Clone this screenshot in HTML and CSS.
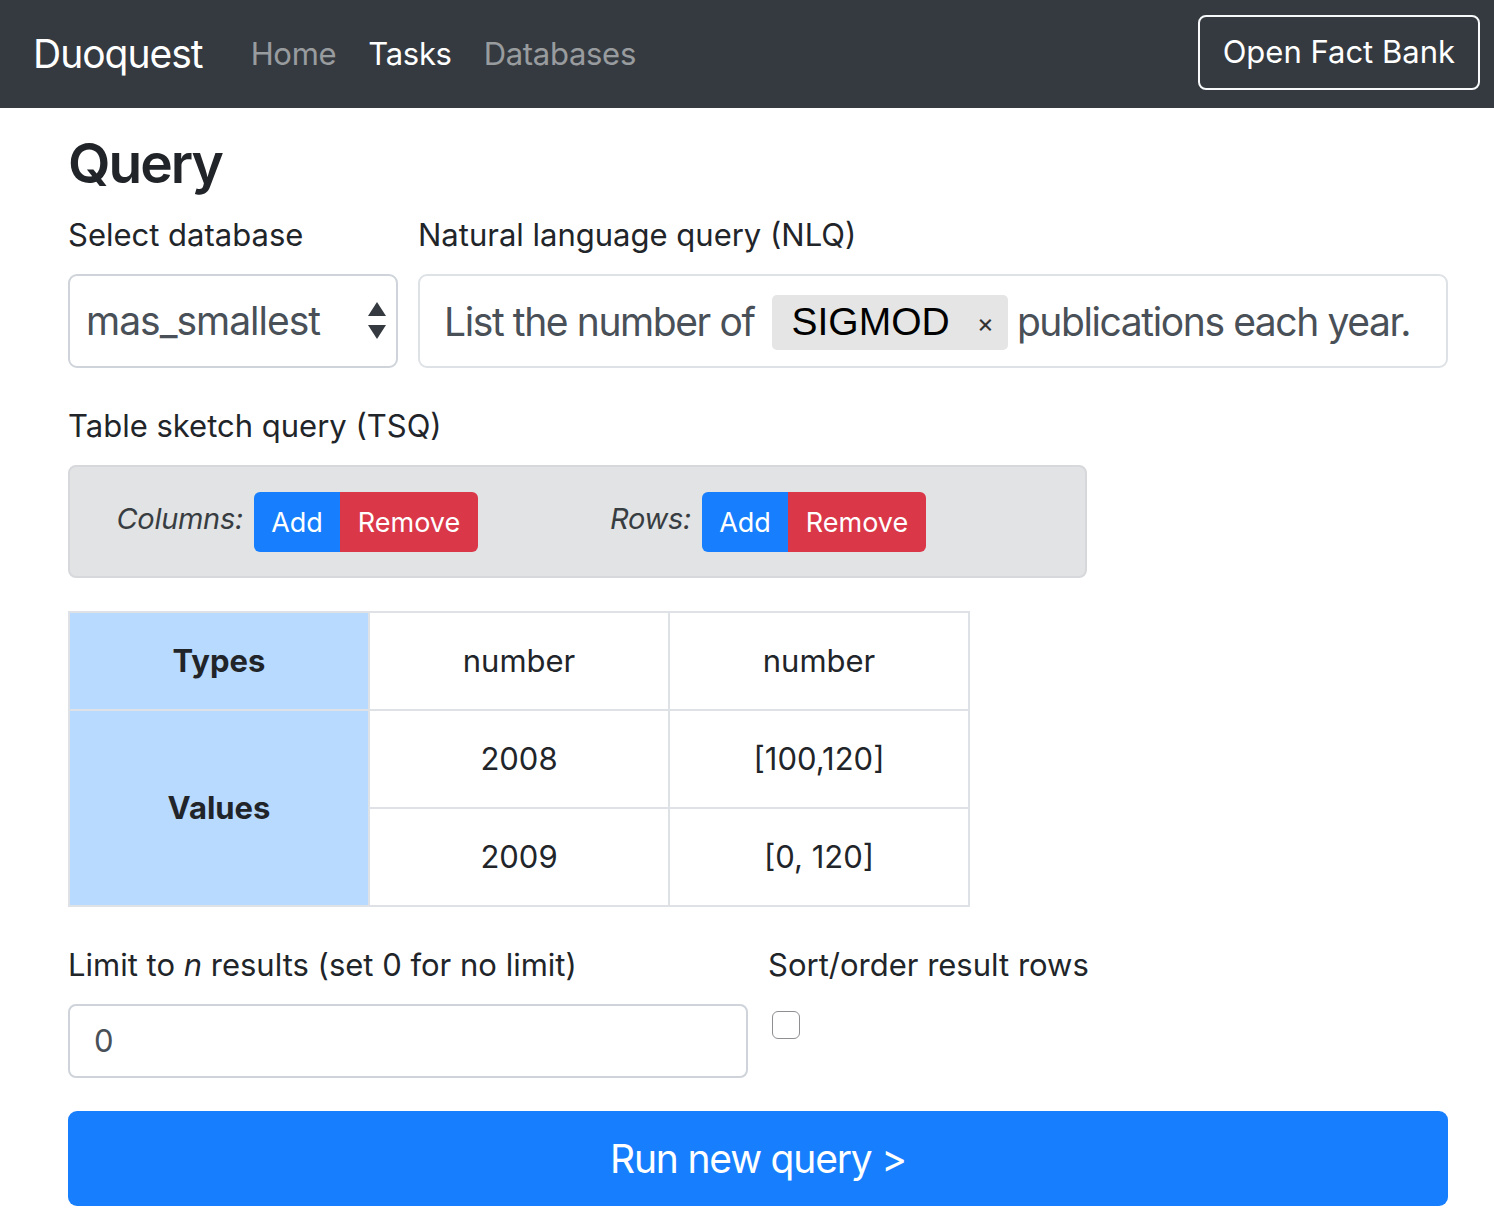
FILE: index.html
```html
<!DOCTYPE html>
<html lang="en">
<head>
<meta charset="utf-8">
<title>Duoquest</title>
<link rel="stylesheet" href="styles.css">
</head>
<body>
<nav class="navbar">
  <a class="brand" href="#">Duoquest</a>
  <ul class="nav">
    <li><a class="nav-link" href="#">Home</a></li>
    <li><a class="nav-link active" href="#">Tasks</a></li>
    <li><a class="nav-link" href="#">Databases</a></li>
  </ul>
  <button class="btn-outline">Open Fact Bank</button>
</nav>

<main class="container">
  <h3 class="title">Query</h3>

  <div class="row-top">
    <div class="group">
      <label class="label">Select database</label>
      <div class="select">
        <span class="select-text">mas_smallest</span>
        <svg class="select-arrows" width="20" height="38" viewBox="0 0 20 38"><path d="M10 0 L19 14 L1 14 Z" fill="#343a40"/><path d="M1 23 L19 23 L10 37 Z" fill="#343a40"/></svg>
      </div>
    </div>
    <div class="group">
      <label class="label">Natural language query (NLQ)</label>
      <div class="nlq">
        <span class="nlq-text">List the number of</span>
        <span class="tag"><span class="tag-text">SIGMOD</span><span class="tag-x">×</span></span>
        <span class="nlq-text">publications each year.</span>
      </div>
    </div>
  </div>

  <label class="label tsq-label">Table sketch query (TSQ)</label>
  <div class="tsq-box">
    <div class="tsq-group">
      <span class="tsq-name">Columns:</span>
      <div class="btn-group">
        <button class="btn-sm primary">Add</button>
        <button class="btn-sm danger">Remove</button>
      </div>
    </div>
    <div class="tsq-group">
      <span class="tsq-name">Rows:</span>
      <div class="btn-group">
        <button class="btn-sm primary">Add</button>
        <button class="btn-sm danger">Remove</button>
      </div>
    </div>
  </div>

  <table class="sketch">
    <tr>
      <th>Types</th>
      <td>number</td>
      <td>number</td>
    </tr>
    <tr>
      <th rowspan="2">Values</th>
      <td>2008</td>
      <td>[100,120]</td>
    </tr>
    <tr>
      <td>2009</td>
      <td>[0, 120]</td>
    </tr>
  </table>

  <div class="row-bottom">
    <div class="group">
      <label class="label">Limit to <em>n</em> results (set 0 for no limit)</label>
      <div class="input">0</div>
    </div>
    <div class="group">
      <label class="label">Sort/order result rows</label>
      <span class="checkbox"></span>
    </div>
  </div>

  <button class="btn-run">Run new query &gt;</button>
</main>
</body>
</html>
```

FILE: styles.css
```css
* { box-sizing: border-box; }
html, body { margin: 0; padding: 0; }
body {
  font-family: Inter, "Liberation Sans", sans-serif;
  font-size: 31px;
  line-height: 1.5;
  color: #212529;
  background: #fff;
  width: 1494px;
  height: 1218px;
  overflow: hidden;
}
.navbar {
  height: 108px;
  background: #343a40;
  display: flex;
  align-items: center;
  padding: 0 13px 0 33px;
}
.brand {
  color: #fff;
  font-size: 39px;
  letter-spacing: -1px;
  text-decoration: none;
  margin-right: 32px;
  line-height: 1.5;
}
.nav {
  list-style: none;
  margin: 0;
  padding: 0;
  display: flex;
  flex: 1;
}
.nav-link {
  display: block;
  padding: 0 16px;
  color: rgba(255,255,255,0.5);
  text-decoration: none;
  font-size: 31px;
  letter-spacing: -0.3px;
}
.nav-link.active { color: #fff; }
.btn-outline {
  font-family: inherit;
  font-size: 31px;
  line-height: 1.5;
  color: #fff;
  background: transparent;
  border: 2px solid #f8f9fa;
  border-radius: 8px;
  height: 75px;
  padding: 0 23px;
  margin-top: -3px;
  margin-right: 1px;
}
.container {
  padding: 22px 46px 0 68px;
}
.title {
  font-size: 55px;
  font-weight: 600;
  letter-spacing: -2px;
  line-height: 1.2;
  margin: 0 0 16px 0;
}
.group {
  display: flex;
  flex-direction: column;
}
.label {
  display: block;
  line-height: 46px;
  margin-bottom: 16px;
}
.row-top {
  display: grid;
  grid-template-columns: 330px minmax(0, 1fr);
  column-gap: 20px;
}
.select {
  height: 94px;
  border: 2px solid #ced4da;
  border-radius: 9px;
  display: flex;
  align-items: center;
  justify-content: space-between;
  padding: 0 9px 0 16px;
  color: #495057;
  font-size: 39px;
  letter-spacing: -1px;
}
.nlq {
  height: 94px;
  border: 2px solid #dee2e6;
  border-radius: 9px;
  display: flex;
  align-items: center;
  padding: 2px 24px 0;
  font-size: 39px;
  letter-spacing: -1.4px;
  color: #495057;
  white-space: nowrap;
  overflow: hidden;
}
.tag {
  display: inline-flex;
  align-items: center;
  background: #e5e5e5;
  border-radius: 5px;
  height: 55px;
  padding: 0 14px 0 20px;
  margin: 0 9px 0 17px;
  color: #000;
  letter-spacing: 0;
}
.tag-text { font-family: "Liberation Sans", Arial, sans-serif; font-size: 39px; }
.tag-x { font-size: 26px; color: #333; margin-left: 27px; }
.tsq-label { margin-top: 35px; }
.tsq-box {
  width: 1019px;
  height: 113px;
  background: #e2e3e5;
  border: 2px solid #d6d8db;
  border-radius: 8px;
  display: flex;
  align-items: center;
}
.tsq-group {
  width: 448px;
  display: flex;
  align-items: center;
}
.tsq-name {
  width: 173px;
  text-align: right;
  font-style: italic;
  font-size: 29px;
  letter-spacing: -0.3px;
  color: #383d41;
  margin-right: 11px;
  position: relative;
  top: -3px;
}
.btn-group { display: flex; }
.btn-sm {
  font-family: inherit;
  font-size: 27px;
  line-height: 1.5;
  height: 60px;
  border: 0;
  color: #fff;
  padding: 4px 0 0 0;
}
.btn-sm.primary {
  background: #177ffe;
  border-radius: 6px 0 0 6px;
  width: 86px;
}
.btn-sm.danger {
  background: #da3749;
  border-radius: 0 6px 6px 0;
  width: 138px;
}
.sketch {
  margin-top: 33px;
  border-collapse: collapse;
  width: 902px;
}
.sketch th, .sketch td {
  border: 2px solid #dee2e6;
  width: 300px;
  height: 98px;
  text-align: center;
  vertical-align: middle;
  padding: 0;
  font-size: 31px;
}
.sketch th {
  background: #b8daff;
  font-weight: 700;
}
.row-bottom {
  margin-top: 35px;
  display: grid;
  grid-template-columns: 680px minmax(0, 1fr);
  column-gap: 20px;
}
.input {
  height: 74px;
  border: 2px solid #ced4da;
  border-radius: 8px;
  padding: 0 24px;
  display: flex;
  align-items: center;
  color: #495057;
}
.checkbox {
  display: block;
  align-self: flex-start;
  width: 28px;
  height: 28px;
  border: 1.5px solid #8e8e93;
  border-radius: 6px;
  margin: 7px 0 0 4px;
  background: #fff;
}
.btn-run {
  display: block;
  width: 1380px;
  height: 95px;
  margin-top: 33px;
  background: #177ffe;
  color: #fff;
  border: 0;
  border-radius: 9px;
  font-family: inherit;
  font-size: 39px;
  letter-spacing: -1.2px;
}
```
